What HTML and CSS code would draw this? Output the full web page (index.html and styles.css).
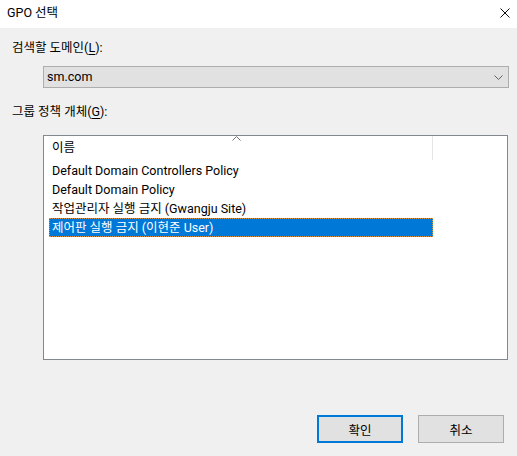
FILE: index.html
```html
<!DOCTYPE html>
<html lang="ko">
<head>
<meta charset="utf-8">
<title>GPO 선택</title>
<link rel="stylesheet" href="styles.css">
</head>
<body>
<div class="dialog">
  <div class="titlebar">
    <span class="title">GPO 선택</span>
    <svg class="close" width="10" height="10" viewBox="0 0 10 10"><path d="M0.5 0.5 L9.5 9.5 M9.5 0.5 L0.5 9.5" stroke="#111" stroke-width="1" fill="none"/></svg>
  </div>
  <div class="content">
    <div class="label label-domain">검색할 도메인(<u>L</u>):</div>
    <div class="combo">
      <span class="combo-text">sm.com</span>
      <svg class="chevron" width="9" height="5" viewBox="0 0 9 5"><path d="M0.5 0.5 L4.5 4.5 L8.5 0.5" stroke="#606060" stroke-width="1" fill="none"/></svg>
    </div>
    <div class="label label-gpo">그룹 정책 개체(<u>G</u>):</div>
    <div class="listbox">
      <div class="header">
        <div class="header-cell">
          <span class="header-text">이름</span>
          <svg class="sort" width="9" height="5" viewBox="0 0 9 5"><path d="M0.5 4.5 L4.5 0.5 L8.5 4.5" stroke="#707070" stroke-width="1" fill="none"/></svg>
        </div>
      </div>
      <div class="rows">
        <div class="row">Default Domain Controllers Policy</div>
        <div class="row">Default Domain Policy</div>
        <div class="row">작업관리자 실행 금지 (Gwangju Site)</div>
        <div class="row selected">제어판 실행 금지 (이현준 User)</div>
      </div>
    </div>
    <div class="buttons">
      <button class="btn btn-default">확인</button>
      <button class="btn">취소</button>
    </div>
  </div>
</div>
</body>
</html>
```
FILE: styles.css
```css
html, body {
  margin: 0;
  padding: 0;
}
body {
  width: 517px;
  height: 456px;
  background: #f0f0f0;
  font-family: "Roboto", "Noto Sans CJK KR", sans-serif;
  font-size: 12.5px;
  color: #000;
  overflow: hidden;
}
.dialog {
  width: 517px;
  height: 456px;
  display: flex;
  flex-direction: column;
}
.titlebar {
  height: 28px;
  background: #fff;
  display: flex;
  align-items: center;
  justify-content: space-between;
  padding: 0 7px 0 7px;
  box-sizing: border-box;
}
.title {
  line-height: 16px;
  margin-top: -2px;
}
.close {
  margin-top: -2px;
  display: block;
}
.content {
  flex: 1;
  padding: 0 8px 0 12px;
  display: flex;
  flex-direction: column;
}
.label {
  height: 20px;
  line-height: 20px;
}
.label u {
  text-decoration: underline;
  text-underline-offset: 2px;
}
.label-domain {
  margin-top: 10px;
}
.combo {
  margin-top: 8px;
  margin-left: 31px;
  width: 466px;
  height: 22px;
  box-sizing: border-box;
  background: #e1e1e1;
  border: 1px solid #adadad;
  display: flex;
  align-items: center;
  justify-content: space-between;
  padding: 0 5px 0 3px;
}
.combo-text {
  line-height: 18px;
}
.chevron {
  display: block;
}
.label-gpo {
  margin-top: 14px;
}
.listbox {
  margin-top: 13px;
  margin-left: 31px;
  width: 465px;
  height: 225px;
  box-sizing: border-box;
  background: #fff;
  border: 1px solid #828790;
}
.header {
  height: 25px;
  display: flex;
}
.header-cell {
  position: relative;
  width: 389px;
  height: 24px;
  box-sizing: border-box;
  border-right: 1px solid #e5e5e5;
  padding-left: 8px;
  display: flex;
  align-items: center;
}
.header-text {
  line-height: 18px;
  margin-top: 0;
}
.sort {
  position: absolute;
  left: 188px;
  top: 0;
}
.rows {
  padding-left: 5px;
}
.row {
  width: 384px;
  height: 19px;
  line-height: 18px;
  padding-top: 1px;
  box-sizing: border-box;
  padding-left: 3px;
  white-space: nowrap;
}
.row.selected {
  background: #0078d7;
  color: #fff;
  outline: 1px dotted #d8944a;
  outline-offset: -1px;
}
.buttons {
  margin-top: 55px;
  display: flex;
  justify-content: flex-end;
  gap: 15px;
  padding-right: 5px;
}
.btn {
  width: 86px;
  height: 28px;
  box-sizing: border-box;
  background: #e1e1e1;
  border: 1px solid #adadad;
  font-family: inherit;
  font-size: 12.5px;
  color: #000;
  padding: 0;
  margin: 0;
}
.btn-default {
  border: 2px solid #0078d7;
}
```
